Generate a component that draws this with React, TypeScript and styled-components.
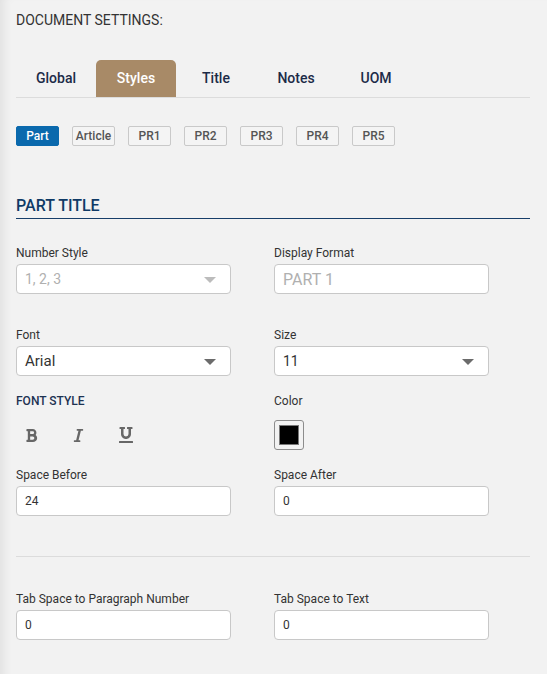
import React from 'react'
import styled, { createGlobalStyle } from 'styled-components'
import { FaBold, FaItalic, FaUnderline } from 'react-icons/fa'

const GlobalStyle = createGlobalStyle`
    html, body {
        margin: 0;
        background: #f2f2f2;
        font-family: Roboto, "Liberation Sans", Arial, sans-serif;
    }
    * {
        box-sizing: border-box;
    }
`

const Page = styled.div`
    min-height: 100vh;
    padding: 12px 17px 40px 16px;
    background: #f2f2f2;
    box-shadow: inset 10px 0 10px -6px rgba(0, 0, 0, 0.07);
`

const Heading = styled.div`
    font-size: 14px;
    line-height: 16px;
    color: #333;
    text-transform: uppercase;
`

const TabBar = styled.div`
    display: flex;
    margin-top: 32px;
    border-bottom: 1px solid #dcdcdc;
`

const Tab = styled.div<{ $active?: boolean }>`
    width: 80px;
    height: 37px;
    display: flex;
    align-items: center;
    justify-content: center;
    padding-bottom: 2px;
    font-size: 14px;
    font-weight: 500;
    color: ${(p) => (p.$active ? '#fff' : '#1c2b48')};
    background: ${(p) => (p.$active ? '#a88a67' : 'transparent')};
    border-radius: 5px 5px 0 0;
    cursor: pointer;
`

const StyleButtons = styled.div`
    display: flex;
    gap: 13px;
    margin-top: 28px;
`

const StyleButton = styled.div<{ $active?: boolean }>`
    width: 43px;
    height: 20px;
    display: flex;
    align-items: center;
    justify-content: center;
    font-size: 12px;
    font-weight: 500;
    color: ${(p) => (p.$active ? '#fff' : '#555')};
    background: ${(p) => (p.$active ? '#0a69ad' : '#f4f4f4')};
    border: 1px solid ${(p) => (p.$active ? '#0a69ad' : '#c9c9c9')};
    border-radius: 2px;
    cursor: pointer;
`

const SectionTitle = styled.div`
    margin-top: 50px;
    padding-bottom: 2px;
    font-size: 16px;
    line-height: 20px;
    font-weight: 500;
    color: #0f3a66;
    border-bottom: 1px solid #173e69;
`

const FieldRow = styled.div<{ $top: number }>`
    display: grid;
    grid-template-columns: 215px 215px;
    column-gap: 43px;
    margin-top: ${(p) => p.$top}px;
`

const Field = styled.div`
    display: flex;
    flex-direction: column;
`

const Label = styled.div<{ $caps?: boolean; $gap?: number }>`
    font-size: 12px;
    line-height: 14px;
    margin-bottom: ${(p) => p.$gap ?? 4}px;
    color: ${(p) => (p.$caps ? '#1d3352' : '#333')};
    font-weight: ${(p) => (p.$caps ? 500 : 400)};
    text-transform: ${(p) => (p.$caps ? 'uppercase' : 'none')};
`

const Box = styled.div<{ $size?: number; $muted?: boolean }>`
    height: 30px;
    display: flex;
    align-items: center;
    justify-content: space-between;
    padding: 0 14px 0 8px;
    background: #fff;
    border: 1px solid #c8c8c8;
    border-radius: 4px;
    font-size: ${(p) => p.$size ?? 12}px;
    color: ${(p) => (p.$muted ? '#b0b0b0' : '#333')};
`

const Caret = styled.span<{ $muted?: boolean }>`
    width: 0;
    height: 0;
    border-left: 6px solid transparent;
    border-right: 6px solid transparent;
    border-top: 6px solid ${(p) => (p.$muted ? '#bcbcbc' : '#6b6b6b')};
    margin-top: 2px;
`

const StyleIcons = styled.div`
    display: flex;
    gap: 16px;
    height: 30px;
`

const IconButton = styled.div`
    width: 31px;
    height: 30px;
    display: flex;
    align-items: center;
    justify-content: center;
    color: #676767;
    cursor: pointer;
`

const Swatch = styled.div`
    width: 30px;
    height: 30px;
    padding: 4px;
    border: 1px solid #8c8c8c;
    border-radius: 3px;
`

const SwatchFill = styled.div<{ $color: string }>`
    width: 100%;
    height: 100%;
    background: ${(p) => p.$color};
    border: 1px solid #777;
`

const Divider = styled.div`
    margin-top: 40px;
    border-top: 1px solid #dcdcdc;
`

const tabs = ['Global', 'Styles', 'Title', 'Notes', 'UOM']
const styleKeys = ['Part', 'Article', 'PR1', 'PR2', 'PR3', 'PR4', 'PR5']

const Select = ({ value, size, muted }: { value: string; size: number; muted?: boolean }) => (
    <Box $size={size} $muted={muted}>
        <span>{value}</span>
        <Caret $muted={muted} />
    </Box>
)

const App = () => {
    return (
        <Page>
            <GlobalStyle />
            <Heading>Document Settings:</Heading>
            <TabBar>
                {tabs.map((t) => (
                    <Tab key={t} $active={t === 'Styles'}>
                        {t}
                    </Tab>
                ))}
            </TabBar>
            <StyleButtons>
                {styleKeys.map((k) => (
                    <StyleButton key={k} $active={k === 'Part'}>
                        {k}
                    </StyleButton>
                ))}
            </StyleButtons>

            <SectionTitle>PART TITLE</SectionTitle>

            <FieldRow $top={27}>
                <Field>
                    <Label>Number Style</Label>
                    <Select value="1, 2, 3" size={14} muted />
                </Field>
                <Field>
                    <Label>Display Format</Label>
                    <Box $size={16} $muted>
                        PART 1
                    </Box>
                </Field>
            </FieldRow>

            <FieldRow $top={34}>
                <Field>
                    <Label>Font</Label>
                    <Select value="Arial" size={15} />
                </Field>
                <Field>
                    <Label>Size</Label>
                    <Select value="11" size={14} />
                </Field>
            </FieldRow>

            <FieldRow $top={18}>
                <Field>
                    <Label $caps $gap={12}>
                        Font Style
                    </Label>
                    <StyleIcons>
                        <IconButton>
                            <FaBold size={15} />
                        </IconButton>
                        <IconButton>
                            <FaItalic size={15} />
                        </IconButton>
                        <IconButton>
                            <FaUnderline size={16} />
                        </IconButton>
                    </StyleIcons>
                </Field>
                <Field>
                    <Label $gap={12}>Color</Label>
                    <Swatch>
                        <SwatchFill $color="#000" />
                    </Swatch>
                </Field>
            </FieldRow>

            <FieldRow $top={18}>
                <Field>
                    <Label>Space Before</Label>
                    <Box>24</Box>
                </Field>
                <Field>
                    <Label>Space After</Label>
                    <Box>0</Box>
                </Field>
            </FieldRow>

            <Divider />

            <FieldRow $top={35}>
                <Field>
                    <Label>Tab Space to Paragraph Number</Label>
                    <Box>0</Box>
                </Field>
                <Field>
                    <Label>Tab Space to Text</Label>
                    <Box>0</Box>
                </Field>
            </FieldRow>
        </Page>
    )
}

export default App
